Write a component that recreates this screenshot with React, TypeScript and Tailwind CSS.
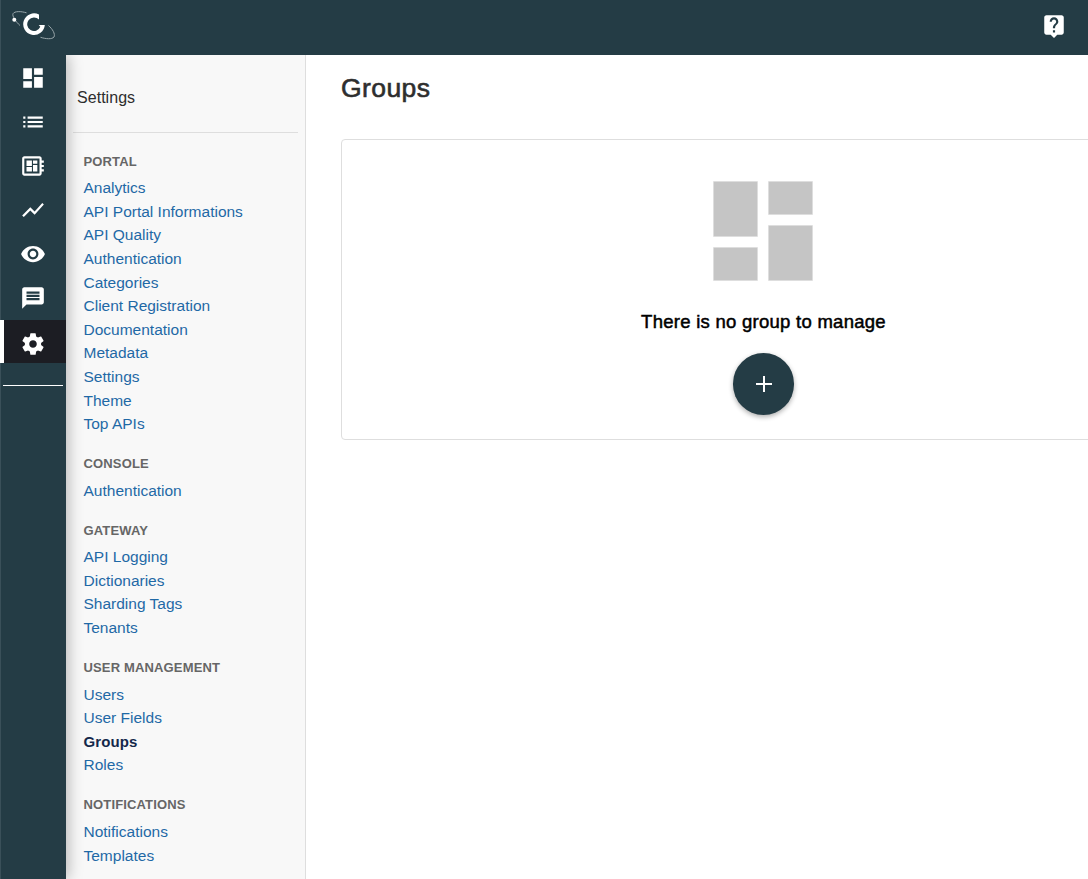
import type { ReactNode } from "react";

interface Section {
  title: string;
  links: string[];
}

const sections: Section[] = [
  {
    title: "PORTAL",
    links: [
      "Analytics",
      "API Portal Informations",
      "API Quality",
      "Authentication",
      "Categories",
      "Client Registration",
      "Documentation",
      "Metadata",
      "Settings",
      "Theme",
      "Top APIs",
    ],
  },
  { title: "CONSOLE", links: ["Authentication"] },
  { title: "GATEWAY", links: ["API Logging", "Dictionaries", "Sharding Tags", "Tenants"] },
  { title: "USER MANAGEMENT", links: ["Users", "User Fields", "Groups", "Roles"] },
  { title: "NOTIFICATIONS", links: ["Notifications", "Templates"] },
];

const DASHBOARD = "M3 13h8V3H3v10zm0 8h8v-6H3v6zm10 0h8V11h-8v10zm0-18v6h8V3h-8z";
const LIST = "M3 13h2v-2H3v2zm0 4h2v-2H3v2zm0-8h2V7H3v2zm4 4h14v-2H7v2zm0 4h14v-2H7v2zM7 7v2h14V7H7z";
const BOARD =
  "M22 9V7h-2V5c0-1.1-.9-2-2-2H4c-1.1 0-2 .9-2 2v14c0 1.1.9 2 2 2h14c1.1 0 2-.9 2-2v-2h2v-2h-2v-2h2v-2h-2V9h2zm-4 10H4V5h14v14zM6 13h5v4H6zm6-6h4v3h-4zM6 7h5v5H6zm6 4h4v6h-4z";
const CHART = "M3.5 18.49l6-6.01 4 4L22 6.92l-1.41-1.41-7.09 7.97-4-4L2 16.99z";
const EYE =
  "M12 4.5C7 4.5 2.73 7.61 1 12c1.73 4.39 6 7.5 11 7.5s9.27-3.11 11-7.5c-1.73-4.39-6-7.5-11-7.5zM12 17c-2.76 0-5-2.24-5-5s2.24-5 5-5 5 2.24 5 5-2.24 5-5 5zm0-8c-1.66 0-3 1.34-3 3s1.34 3 3 3 3-1.34 3-3-1.34-3-3-3z";
const MESSAGE =
  "M20 2H4c-1.1 0-1.99.9-1.99 2L2 22l4-4h14c1.1 0 2-.9 2-2V4c0-1.1-.9-2-2-2zM6 9h12v2H6V9zm12 5H6v-2h12v2zm0-6H6V6h12v2z";
const COG =
  "M19.43 12.98c.04-.32.07-.64.07-.98s-.03-.66-.07-.98l2.11-1.65c.19-.15.24-.42.12-.64l-2-3.46c-.12-.22-.39-.3-.61-.22l-2.49 1c-.52-.4-1.08-.73-1.69-.98l-.38-2.65C14.46 2.18 14.25 2 14 2h-4c-.25 0-.46.18-.49.42l-.38 2.65c-.61.25-1.17.59-1.69.98l-2.49-1c-.23-.09-.49 0-.61.22l-2 3.46c-.13.22-.07.49.12.64l2.11 1.65c-.04.32-.07.65-.07.98s.03.66.07.98l-2.11 1.65c-.19.15-.24.42-.12.64l2 3.46c.12.22.39.3.61.22l2.49-1c.52.4 1.08.73 1.69.98l.38 2.65c.03.24.24.42.49.42h4c.25 0 .46-.18.49-.42l.38-2.65c.61-.25 1.17-.59 1.69-.98l2.49 1c.23.09.49 0 .61-.22l2-3.46c.12-.22.07-.49-.12-.64l-2.11-1.65zM12 15.5c-1.93 0-3.5-1.57-3.5-3.5s1.57-3.5 3.5-3.5 3.5 1.57 3.5 3.5-1.57 3.5-3.5 3.5z";
const HELP =
  "M19 2H5c-1.11 0-2 .9-2 2v14c0 1.1.89 2 2 2h4l3 3 3-3h4c1.1 0 2-.9 2-2V4c0-1.1-.9-2-2-2zm-6 16h-2v-2h2v2zm2.07-7.75l-.9.92C13.45 11.9 13 12.5 13 14h-2v-.5c0-1.1.45-2.1 1.17-2.83l1.24-1.26c.37-.36.59-.86.59-1.41 0-1.1-.9-2-2-2s-2 .9-2 2H8c0-2.21 1.79-4 4-4s4 1.79 4 4c0 .88-.36 1.68-.93 2.25z";

function Icon({ d, className }: { d: string; className: string }) {
  return (
    <svg viewBox="0 0 24 24" className={`shrink-0 fill-current ${className}`} aria-hidden="true">
      <path d={d} />
    </svg>
  );
}

function RailItem({ children, active = false }: { children: ReactNode; active?: boolean }) {
  return (
    <button
      className={
        active
          ? "flex h-[43px] w-full items-center justify-center border-l-4 border-white bg-[#1c1d23] pr-1 pt-1 text-white"
          : "flex h-11 w-full items-center justify-center text-white"
      }
    >
      {children}
    </button>
  );
}

function Logo() {
  return (
    <svg viewBox="0 0 46 32" className="h-8 w-[46px]" fill="none" aria-hidden="true">
      <path d="M16.500 3.800C11 2.200 4.500 2 3 4.700C2 7 5.500 12.500 10 16.500" stroke="#9aa7ab" strokeWidth="1" />
      <path d="M38.500 16.500C42.500 20 45.500 25 44 28C42 30.500 36 30 30.500 28.300" stroke="#9aa7ab" strokeWidth="1" />
      <circle cx="4.300" cy="10.700" r="2" fill="#fff" />
      <path d="M29 5.600A10.800 10.800 0 1 0 34.800 16H28.700L30.300 17.800A6.800 6.800 0 1 1 29 10.600Z" fill="#fff" />
    </svg>
  );
}

export default function App() {
  return (
    <div className="flex h-[879px] w-[1088px] flex-col overflow-hidden bg-white font-['Liberation_Sans',Arial,sans-serif]">
      <header className="flex h-[55px] shrink-0 items-center justify-between border-l border-[#3a5059] bg-[#243c45] pr-[21px] pl-[9px]">
        <div className="pb-[5px]">
          <Logo />
        </div>
        <button className="pb-[3px] text-white">
          <Icon d={HELP} className="size-[26px]" />
        </button>
      </header>
      <div className="flex min-h-0 flex-1">
        <nav className="z-10 flex w-[66px] shrink-0 flex-col border-l border-[#3a5059] bg-[#243c45] shadow-[2px_0_14px_rgba(0,0,0,0.28)] [clip-path:inset(0_-20px_0_0)]">
          <div className="-ml-px flex flex-col pt-px">
            <RailItem><Icon d={DASHBOARD} className="size-[26px]" /></RailItem>
            <RailItem><Icon d={LIST} className="size-[26px]" /></RailItem>
            <RailItem><Icon d={BOARD} className="size-[26px]" /></RailItem>
            <RailItem><Icon d={CHART} className="size-[26px]" /></RailItem>
            <RailItem><Icon d={EYE} className="size-[26px]" /></RailItem>
            <RailItem><Icon d={MESSAGE} className="size-[26px]" /></RailItem>
            <RailItem active><Icon d={COG} className="size-[26px]" /></RailItem>
            <div className="mt-[22px] mr-[3px] ml-[3px] h-px bg-white" />
          </div>
        </nav>
        <aside className="w-60 shrink-0 border-r border-[#dedede] bg-[#f8f8f8]">
          <div className="mr-[7px] ml-[7px] flex h-[78px] items-center border-b border-[#dedede] pt-[9px] pl-1 text-[16px] tracking-[0.04px] text-[#2e2e2e]">
            Settings
          </div>
          <div className="flex flex-col gap-[12.95px] pt-[13.3px] pl-[17.5px]">
            {sections.map((section) => (
              <section key={section.title}>
                <h2 className="flex h-[30px] items-center text-[13px] font-bold tracking-[0.15px] text-[#666]">
                  {section.title}
                </h2>
                <ul>
                  {section.links.map((link) => (
                    <li
                      key={link}
                      className={
                        link === "Groups"
                          ? "h-[23.6px] text-[15px] leading-[23.6px] font-bold tracking-[0.1px] text-[#14284b]"
                          : "h-[23.6px] text-[15.5px] leading-[23.6px] text-[#1f69a6]"
                      }
                    >
                      {link}
                    </li>
                  ))}
                </ul>
              </section>
            ))}
          </div>
        </aside>
        <main className="min-w-0 flex-1 pl-[35px]">
          <h1 className="flex h-[84px] items-center pb-[16px] text-[26.5px] tracking-[0.4px] text-[#2e2e2e] [-webkit-text-stroke:0.6px_#2e2e2e]">
            Groups
          </h1>
          <div className="flex h-[301px] w-[845px] flex-col items-center rounded border border-[#dedede] pt-[25px]">
            <svg viewBox="0 0 24 24" className="mr-px size-[132px] shrink-0" aria-hidden="true">
              <path d={DASHBOARD} fill="#c5c5c5" stroke="#dadada" strokeWidth="0.1" />
            </svg>
            <p className="mt-[11px] flex h-7 items-center text-[18.5px] tracking-[0.27px] whitespace-nowrap text-black [-webkit-text-stroke:0.5px_#000]">
              There is no group to manage
            </p>
            <button className="mt-[17px] flex h-[62px] w-[61px] shrink-0 items-center justify-center rounded-full bg-[#243c45] text-white shadow-[0_2px_5px_rgba(0,0,0,0.32)]">
              <svg viewBox="0 0 16 16" className="size-4" aria-hidden="true">
                <path d="M0 8H16M8 0V16" stroke="currentColor" strokeWidth="2" />
              </svg>
            </button>
          </div>
        </main>
      </div>
    </div>
  );
}
